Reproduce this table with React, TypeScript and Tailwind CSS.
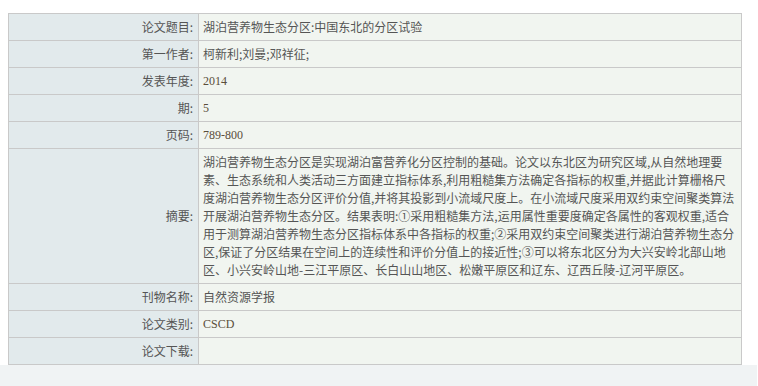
import React from "react";

const font = { fontFamily: '"Noto Sans CJK SC", "Liberation Sans", sans-serif' };

function Row({ label, children, tall }: { label: string; children?: React.ReactNode; tall?: boolean }) {
	return (
		<div className={`flex border-b border-[#c9c9c9] overflow-hidden ${tall ? "h-[135px]" : "h-[27px]"}`}>
			<div className="w-[190px] shrink-0 bg-[#e2eaec] border-r border-[#c9c9c9] flex items-center justify-end pr-[5px] text-[12px] leading-[18px] text-[#555]">
				{label}:
			</div>
			<div className="flex-1 bg-[#f1f5f0] pl-[4px] flex flex-col justify-center text-[12px] leading-[18px] text-[#555]">
				{children}
			</div>
		</div>
	);
}

const abstractLines = [
	"湖泊营养物生态分区是实现湖泊富营养化分区控制的基础。论文以东北区为研究区域,从自然地理要",
	"素、生态系统和人类活动三方面建立指标体系,利用粗糙集方法确定各指标的权重,并据此计算栅格尺",
	"度湖泊营养物生态分区评价分值,并将其投影到小流域尺度上。在小流域尺度采用双约束空间聚类算法",
	"开展湖泊营养物生态分区。结果表明:①采用粗糙集方法,运用属性重要度确定各属性的客观权重,适合",
	"用于测算湖泊营养物生态分区指标体系中各指标的权重;②采用双约束空间聚类进行湖泊营养物生态分",
	"区,保证了分区结果在空间上的连续性和评价分值上的接近性;③可以将东北区分为大兴安岭北部山地",
	"区、小兴安岭山地-三江平原区、长白山山地区、松嫩平原区和辽东、辽西丘陵-辽河平原区。",
];

const serif = "font-['Liberation_Serif',serif] text-[#5a4e3a] leading-[18px]";

export default function App() {
	return (
		<div className="w-[758px] h-[386px] bg-white flex flex-col overflow-hidden" style={font}>
			<div className="pt-[13px] pl-[8px]">
				<div className="w-[734px] border-t border-l border-r border-[#c9c9c9]">
					<Row label="论文题目">
						<div>湖泊营养物生态分区:中国东北的分区试验</div>
					</Row>
					<Row label="第一作者">
						<div>柯新利;刘曼;邓祥征;</div>
					</Row>
					<Row label="发表年度">
						<div className={serif}>2014</div>
					</Row>
					<Row label="期">
						<div className={serif}>5</div>
					</Row>
					<Row label="页码">
						<div className={serif}>789-800</div>
					</Row>
					<Row label="摘要" tall>
						{abstractLines.map((l) => (
							<div key={l} className="whitespace-nowrap">
								{l}
							</div>
						))}
					</Row>
					<Row label="刊物名称">
						<div>自然资源学报</div>
					</Row>
					<Row label="论文类别">
						<div className={serif}>CSCD</div>
					</Row>
					<Row label="论文下载" />
				</div>
			</div>
			<div className="flex-1 w-[757px] bg-[#f0f3f4]" />
		</div>
	);
}
